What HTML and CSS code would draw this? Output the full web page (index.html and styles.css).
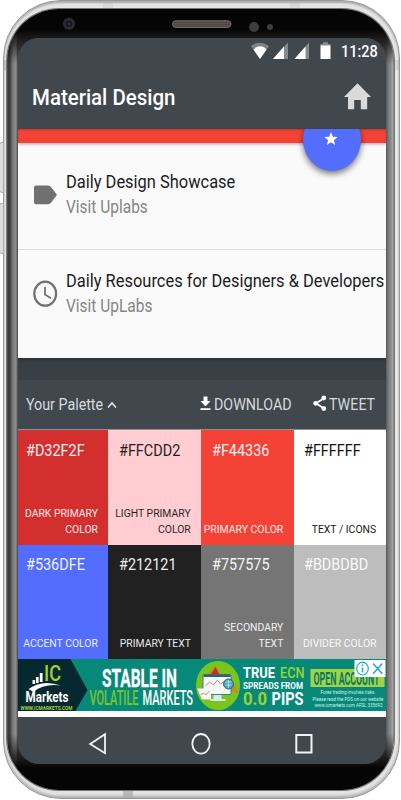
FILE: index.html
```html
<!DOCTYPE html>
<html lang="en">
<head>
<meta charset="utf-8">
<title>Material Design</title>
<link rel="stylesheet" href="styles.css">
</head>
<body>
<div class="phone">
  <i class="key key-up"></i><i class="key key-down"></i>
  <div class="bezel">
    <svg class="sensors" viewBox="7 9 387 29">
      <defs><pattern id="mesh" width="2" height="2" patternUnits="userSpaceOnUse"><rect width="2" height="2" fill="#3c3434"/><circle cx="1" cy="1" r=".6" fill="#a39894"/></pattern></defs>
      <circle cx="69" cy="23.8" r="6.2" fill="#28262a"/><circle cx="69" cy="23.8" r="4" fill="#151419" stroke="#38343c"/><circle cx="69" cy="23.8" r="1.5" fill="#343040"/>
      <rect x="172.5" y="20.7" width="58.5" height="6.8" rx="3.4" fill="url(#mesh)" stroke="#77716f" stroke-width=".9"/>
      <circle cx="254" cy="27" r="5" fill="#3f3b3f"/><circle cx="270" cy="27" r="3" fill="#403c40"/>
    </svg>
    <div class="screen">
      <header class="header">
        <div class="status">
          <svg class="status-icons" viewBox="250 41 82 20">
            <path d="M251 46.3C255.5 41.6 264 41.6 269 46.3L260 59Z" fill="#7c8286"/><path d="M253.5 49.5C257 45.3 263 45.3 266.5 49.5L260 59Z" fill="#fff"/>
            <path d="M273 59L288 42.5V59Z" fill="#868b8e"/><path d="M273 59L284 46.5V59Z" fill="#fff"/>
            <path d="M294.5 59L309 42.5V59Z" fill="#868b8e"/><path d="M294.5 59L305.5 46.5V59Z" fill="#fff"/>
            <path d="M323 42.3h5v1.6h2.5V46h-10v-2.1h2.5z" fill="#868b8e"/><path d="M320.5 45.5h10V59h-10z" fill="#fff"/>
          </svg>
          <span class="time">11:28</span>
        </div>
        <div class="toolbar">
          <h1 class="title">Material Design</h1>
          <svg class="home" viewBox="0 0 27 27"><path d="M13.5 .3L27 14H23.2V26.3H16.8V17H10.2V26.3H4V14H0Z" fill="#d9dadb"/></svg>
        </div>
      </header>
      <div class="accent">
        <div class="fab-clip"><div class="fab"><svg class="star" viewBox="0 0 24 24"><path d="M12 1l3.1 7.8 8.4.6-6.5 5.4 2.1 8.2L12 18.5 4.9 23 7 14.8.5 9.4l8.4-.6z" fill="#fff"/></svg></div></div>
      </div>
      <main class="list">
        <section class="item">
          <svg class="item-icon" viewBox="0 0 26 28"><path d="M3 4.5H15Q17 4.5 18.2 6.2L24 13.8 18.2 21.5Q17 23.3 15 23.3H3Q1 23.3 1 21.3V6.5Q1 4.5 3 4.5Z" fill="#707070"/></svg>
          <div class="item-text"><span class="item-title">Daily Design Showcase</span><span class="item-sub">Visit Uplabs</span></div>
        </section>
        <section class="item second">
          <svg class="item-icon" viewBox="0 0 26 28"><ellipse cx="12.2" cy="13.7" rx="10.9" ry="12" fill="none" stroke="#707070" stroke-width="2.2"/><path d="M12 7V14.5L18 18.2" fill="none" stroke="#707070" stroke-width="1.8"/></svg>
          <div class="item-text"><span class="item-title">Daily Resources for Designers &amp; Developers</span><span class="item-sub">Visit UpLabs</span></div>
        </section>
      </main>
      <div class="gap"></div>
      <div class="actions">
        <span class="act palette-label">Your Palette</span>
        <svg class="chev" viewBox="0 0 10 8"><path d="M1 6.5L5 2l4 4.5" fill="none" stroke="#e4e5e6" stroke-width="1.6"/></svg>
        <svg class="dl" viewBox="0 0 11 15"><path d="M3.5 .5h4V5H10.5L5.5 10.5.5 5H3.5ZM.5 12.2h10v1.8H.5z" fill="#fff"/></svg>
        <span class="act download-label">DOWNLOAD</span>
        <svg class="share" viewBox="0 0 14 17"><path d="M11 3.2L3 8.3l8 5.1" fill="none" stroke="#fff" stroke-width="1.8"/><circle cx="10.8" cy="3" r="2.4" fill="#fff"/><circle cx="2.7" cy="8.3" r="2.4" fill="#fff"/><circle cx="10.8" cy="13.6" r="2.4" fill="#fff"/></svg>
        <span class="act tweet-label">TWEET</span>
      </div>
      <div class="swatches">
        <div class="swatch first dark-primary"><span class="hex">#D32F2F</span><span class="role">DARK PRIMARY<br>COLOR</span></div>
        <div class="swatch light-primary"><span class="hex">#FFCDD2</span><span class="role">LIGHT PRIMARY<br>COLOR</span></div>
        <div class="swatch primary"><span class="hex">#F44336</span><span class="role">PRIMARY COLOR</span></div>
        <div class="swatch icons"><span class="hex">#FFFFFF</span><span class="role">TEXT / ICONS</span></div>
        <div class="swatch first accent-color"><span class="hex">#536DFE</span><span class="role">ACCENT COLOR</span></div>
        <div class="swatch primary-text"><span class="hex">#212121</span><span class="role">PRIMARY TEXT</span></div>
        <div class="swatch secondary"><span class="hex">#757575</span><span class="role">SECONDARY<br>TEXT</span></div>
        <div class="swatch divider"><span class="hex">#BDBDBD</span><span class="role">DIVIDER COLOR</span></div>
      </div>
      <svg class="ad" viewBox="17.5 659 368.5 58">
        <rect x="17" y="659" width="370" height="52" fill="#07897a"/>
        <path d="M17 659H70L87 690 75 711H17Z" fill="#06292f"/>
        <path d="M32 680h2.6v4h-2.6zM35.5 677h2.6v6h-2.6zM39.3 673h2.8v9h-2.8z" fill="#fff"/>
        <path d="M28 689Q42 679 60 685.5Q43 683.5 33 692Z" fill="#fff"/>
        <g font-family="Roboto, sans-serif" font-weight="700">
          <text x="43.5" y="681" font-size="21.5" font-weight="500" fill="#a6ce39" textLength="17" lengthAdjust="spacingAndGlyphs">IC</text>
          <text x="25" y="701.5" font-size="14.5" fill="#fff" textLength="43" lengthAdjust="spacingAndGlyphs">Markets</text>
          <text x="20" y="709.7" font-size="5.6" fill="#a6ce39" textLength="52" lengthAdjust="spacingAndGlyphs">WWW.ICMARKETS.COM</text>
          <text x="101.5" y="686.5" font-size="26.5" fill="#fff" stroke="#fff" stroke-width=".3" textLength="75" lengthAdjust="spacingAndGlyphs">STABLE IN</text>
          <text x="89" y="705" font-size="19.5" font-weight="500" fill="#76c52c" stroke="#76c52c" stroke-width=".2" textLength="49" lengthAdjust="spacingAndGlyphs">VOLATILE</text>
          <text x="142" y="705" font-size="19.5" font-weight="500" fill="#fff" textLength="50.5" lengthAdjust="spacingAndGlyphs">MARKETS</text>
          <text x="242.5" y="678" font-size="15.5" fill="#fff" textLength="32" lengthAdjust="spacingAndGlyphs">TRUE</text>
          <text x="279.5" y="678" font-size="15.5" font-weight="500" fill="#9bd52b" textLength="24.5" lengthAdjust="spacingAndGlyphs">ECN</text>
          <text x="242.5" y="689" font-size="9.5" fill="#fff" textLength="60" lengthAdjust="spacingAndGlyphs">SPREADS FROM</text>
          <text x="242.5" y="705" font-size="17.5" fill="#9bd52b" textLength="24" lengthAdjust="spacingAndGlyphs">0.0</text>
          <text x="271" y="705" font-size="17.5" fill="#fff" textLength="32" lengthAdjust="spacingAndGlyphs">PIPS</text>
        </g>
        <ellipse cx="217.5" cy="685.5" rx="22" ry="24.5" fill="#7ac41e"/>
        <path d="M207 674l8-8 6 8 9 4 9 16-7-3-9-12-13-1z" fill="#d0882a"/>
        <path d="M210 675l5-8 4 8z" fill="#b83424"/>
        <rect x="202.5" y="674.5" width="28" height="20" rx="1" fill="#f4f7f8" stroke="#2d6275" stroke-width=".8"/><path d="M203 674.5h27v2.5h-27z" fill="#2d6275"/>
        <path d="M205 686l4-4 4 3 4-5 3 4 4-3" fill="none" stroke="#d38b82" stroke-width="1"/>
        <path d="M213 695h8v4h4v2h-15v-2h3z" fill="#d3edf5"/><path d="M196.5 688.5h14v11h-9z" fill="#f5f6f8"/><path d="M200 695l3-2 2 2 4-4" fill="none" stroke="#cc837d"/>
        <circle cx="228" cy="684" r="5" fill="#4fa3bd" stroke="#226785"/><path d="M225 682h6m-6 3h6m-3-5v8" stroke="#d5f1f6" stroke-width=".7"/>
        <rect x="310" y="669" width="74" height="18" fill="#a0d34a"/>
        <text x="313" y="684.5" font-family="Roboto, sans-serif" font-size="17.5" font-weight="700" fill="#087a62" textLength="66" lengthAdjust="spacingAndGlyphs">OPEN ACCOUNT</text>
        <g font-family="Roboto, sans-serif" font-size="5.4" fill="#d7eeea">
          <text x="320" y="694" textLength="55" lengthAdjust="spacingAndGlyphs">Forex trading involves risks.</text>
          <text x="312" y="700.5" textLength="71" lengthAdjust="spacingAndGlyphs">Please read the PDS on our website</text>
          <text x="314" y="707" textLength="68" lengthAdjust="spacingAndGlyphs">www.icmarkets.com AFSL 335692</text>
        </g>
        <rect x="354" y="660" width="31" height="17" fill="#fff"/>
        <ellipse cx="362" cy="668.6" rx="5.8" ry="6.4" fill="none" stroke="#20a9cf" stroke-width="1.2"/><path d="M362 667.5v5M362 664.5v1.6M372.6 663.5l9.2 10.3m0-10.3l-9.2 10.3" stroke="#20a9cf" stroke-width="1.5"/>
      </svg>
      <nav class="nav">
        <svg viewBox="0 0 20 24"><path d="M17 2.2V21.2L2.2 12Z" fill="none" stroke="#f1f2f2" stroke-width="1.8"/></svg>
        <svg viewBox="0 0 20 24"><ellipse cx="10" cy="11.8" rx="8.7" ry="9.8" fill="none" stroke="#f1f2f2" stroke-width="1.8"/></svg>
        <svg viewBox="0 0 20 24"><path d="M2.3 3h15.2v17.5H2.3z" fill="none" stroke="#f1f2f2" stroke-width="2"/></svg>
      </nav>
    </div>
  </div>
</div>
</body>
</html>
```
FILE: styles.css
```css
* { box-sizing: border-box; }
body { margin: 0; width: 401px; height: 800px; overflow: hidden; background: #fff; font-family: Roboto, sans-serif; }
svg { display: block; flex: none; }

.phone {
  position: relative;
  width: 397px;
  height: 799px;
  margin-left: 3px;
  padding: 8px 5px 8px 3px;
  border: 1px solid #999;
  border-radius: 58px;
  background:
    linear-gradient(#d8d8d8, #d8d8d8) 99px 0 / 10px 8px no-repeat,
    linear-gradient(#d8d8d8, #d8d8d8) 286px 0 / 10px 8px no-repeat,
    linear-gradient(#bbb, #bbb) 119px 100% / 10px 8px no-repeat,
    linear-gradient(#c8c8c8, #c8c8c8) 0 59px / 4px 10px no-repeat,
    linear-gradient(#d8d8d8, #d8d8d8) 100% 59px / 6px 10px no-repeat,
    linear-gradient(90deg, #fff 0, #e4e4e4 3px, #e4e4e4 390px, #f5f5f5 396px);
  box-shadow: inset 0 2px 2px #aaa, inset 0 -2px 3px #aaa;
}
.key { position: absolute; left: -5px; width: 5px; height: 51px; background: #ddd; border: 1px solid #aaa; border-radius: 3px 0 0 3px; }
.key-up { top: 141px; }
.key-down { top: 202px; }
.bezel {
  width: 387px;
  height: 781px;
  border-radius: 52px;
  overflow: hidden;
  box-shadow: 0 0 0 1px #777;
  background:
    linear-gradient(#050505 0, #050505 20px, transparent 55px, transparent 725px, #050505 759px),
    linear-gradient(90deg, #555 0, #333 2px, #555 4px, #808080 6px, #8c8c8c 9px, #555 10.5px, #555 379px, #777 381px, #8d8d8d 384px, #aaa 386px, #666 387px);
}
.sensors { width: 387px; height: 29px; }
.screen { width: 368.5px; height: 726px; margin-left: 10.5px; border-radius: 21px; overflow: hidden; background: #40484e; }

.header { height: 91px; background: #40484d; }
.status { display: flex; height: 28px; padding: 3px 0 0 232.5px; }
.status-icons { width: 82px; height: 20px; }
.time { margin-left: 9px; font-size: 16.3px; line-height: 21px; font-weight: 500; color: #fff; transform: scaleX(.89); transform-origin: left; }
.toolbar { display: flex; justify-content: space-between; padding: 16px 15.5px 0 14px; }
.title { margin: 0; font-size: 22.3px; line-height: 30px; font-weight: 500; color: #fff; white-space: nowrap; transform: scaleX(.917); transform-origin: left; }
.home { width: 27px; height: 27px; margin-top: 1px; }

.accent { position: relative; z-index: 1; height: 13.5px; background: #f44336; box-shadow: 0 1px 3px #0005, inset 0 1px 2px #0003; }
.fab-clip { position: absolute; left: 275px; top: 0; width: 80px; height: 60px; overflow: hidden; }
.fab { width: 58px; height: 63px; margin: -21px 0 0 10px; padding: 23px 0 0 21.5px; border-radius: 50%; background: #536dfe; box-shadow: 0 3px 6px #0008; }
.star { width: 14px; height: 15px; }

.list { height: 215px; background: #fafafa; }
.item { display: flex; height: 107.5px; padding: 26px 0 0 15.5px; border-bottom: 1px solid #dcdcdc; }
.second { height: 107px; padding-top: 17.5px; border: 0; }
.item-icon { width: 26px; height: 28px; margin-top: 12px; }
.item-text { margin-left: 7px; display: flex; flex-direction: column; white-space: nowrap; }
.item-title, .item-sub { font-size: 17.8px; line-height: 25px; transform: scaleX(.925); transform-origin: left; color: #1c1c1c; }
.item-sub { transform: scaleX(.87); color: #858585; }

.gap { height: 22.5px; background: linear-gradient(#2c3338, #373f45 5px, #394147); }
.actions { display: flex; height: 50px; padding-left: 8px; background: #40484d; border-bottom: 1.5px solid #8d9193; align-items: center; }
.act { font-size: 16.8px; line-height: 24px; margin-top: -1px; color: #d8dadb; white-space: nowrap; transform: scaleX(.85); transform-origin: left; }
.palette-label { width: 81.5px; }
.chev { width: 10px; height: 8px; }
.dl { width: 11px; height: 15px; margin: -3px 0 0 82.5px; }
.download-label { width: 99.5px; margin-left: 3px; }
.share { width: 14px; height: 17px; margin-top: -2px; }
.tweet-label { margin-left: 2px; }

.swatches { display: grid; grid-template: 114.5px 114.5px / 90.5px 93px 92.5px 92.5px; }
.swatch { display: flex; flex-direction: column; justify-content: space-between; padding: 9.5px 10px 7.5px 10.5px; color: #fff; }
.first { padding-left: 8.5px; }
.hex { align-self: flex-start; font-size: 16.4px; line-height: 22px; transform: scaleX(.88); transform-origin: left; opacity: .93; }
.role { align-self: flex-end; flex: none; font-size: 11.8px; line-height: 16.2px; text-align: right; white-space: nowrap; transform: scaleX(.88); transform-origin: right; opacity: .9; }
.dark-primary { background: #d32f2f; }
.light-primary { background: #ffcdd2; color: #111; }
.primary { background: #f44336; }
.icons { background: #fff; color: #000; }
.accent-color { background: #536dfe; }
.primary-text { background: #212121; }
.secondary { background: #757575; }
.divider { background: #bdbdbd; }

.ad { width: 368.5px; height: 58px; background: #fff; }
.nav { display: flex; height: 47px; padding: 15px 0 0 70.5px; gap: 83px; }
.nav svg { width: 20px; height: 24px; }
```
